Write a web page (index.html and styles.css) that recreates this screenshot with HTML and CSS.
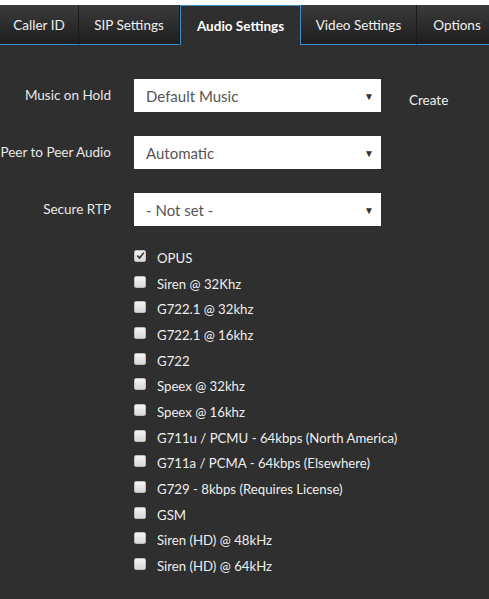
FILE: index.html
```html
<!DOCTYPE html>
<html>
<head>
<meta charset="utf-8">
<link rel="stylesheet" href="styles.css">
</head>
<body>
<div class="page">
  <nav class="tabs">
    <div class="tab t1">Caller ID</div>
    <div class="tab t2">SIP Settings</div>
    <div class="tab t3 active">Audio Settings</div>
    <div class="tab t4">Video Settings</div>
    <div class="tab t5">Options</div>
  </nav>
  <main class="content">
    <div class="row">
      <label class="label">Music on Hold</label>
      <div class="select"><span>Default Music</span><span class="arrow">▼</span></div>
      <a class="create">Create</a>
    </div>
    <div class="row">
      <label class="label">Peer to Peer Audio</label>
      <div class="select"><span>Automatic</span><span class="arrow">▼</span></div>
    </div>
    <div class="row">
      <label class="label">Secure RTP</label>
      <div class="select"><span>- Not set -</span><span class="arrow">▼</span></div>
    </div>
    <ul class="codecs">
      <li><span class="box checked"><svg viewBox="0 0 10 10" width="9" height="9"><path d="M1.5 5.2 L4 7.8 L8.6 1.8" fill="none" stroke="#333" stroke-width="1.8"/></svg></span>OPUS</li>
      <li><span class="box"></span>Siren @ 32Khz</li>
      <li><span class="box"></span>G722.1 @ 32khz</li>
      <li><span class="box"></span>G722.1 @ 16khz</li>
      <li><span class="box"></span>G722</li>
      <li><span class="box"></span>Speex @ 32khz</li>
      <li><span class="box"></span>Speex @ 16khz</li>
      <li><span class="box"></span>G711u / PCMU - 64kbps (North America)</li>
      <li><span class="box"></span>G711a / PCMA - 64kbps (Elsewhere)</li>
      <li><span class="box"></span>G729 - 8kbps (Requires License)</li>
      <li><span class="box"></span>GSM</li>
      <li><span class="box"></span>Siren (HD) @ 48kHz</li>
      <li><span class="box"></span>Siren (HD) @ 64kHz</li>
    </ul>
  </main>
</div>
</body>
</html>
```

FILE: styles.css
```css
html, body {
  margin: 0;
  padding: 0;
  background: #2f2f2f;
  font-family: Lato, "Open Sans", sans-serif;
  overflow: hidden;
}
.page {
  width: 489px;
  height: 599px;
  background: #2f2f2f;
  box-sizing: border-box;
  border-top: 5px solid #ffffff;
}
.tabs {
  display: flex;
  height: 40px;
  background: #fff;
}
.tab {
  box-sizing: border-box;
  height: 40px;
  display: flex;
  align-items: center;
  justify-content: center;
  color: #f0f0f0;
  font-size: 13.5px;
  background: linear-gradient(#3b3b3b, #1e1e1e);
  border-bottom: 1px solid #3d8fc9;
  border-right: 1px solid #1a1a1a;
  flex: none;
}
.t1 { width: 79px; }
.t2 { width: 101px; }
.t3 { width: 121px; }
.t4 { width: 116px; }
.t5 { width: 80px; border-right: none; }
.tab.active {
  background: #2f2f2f;
  border: 1px solid #3d8fc9;
  border-bottom: none;
  font-weight: bold;
  color: #ffffff;
}
.content {
  padding-top: 34px;
}
.row {
  display: flex;
  align-items: center;
  height: 33px;
  margin-bottom: 24px;
}
.label {
  width: 111px;
  text-align: right;
  color: #e8e8e8;
  font-size: 13.5px;
  white-space: nowrap;
  margin-right: 23px;
  display: flex;
  justify-content: flex-end;
  margin-top: -2px;
}
.select {
  width: 247px;
  height: 33px;
  box-sizing: border-box;
  background: #ffffff;
  display: flex;
  align-items: center;
  justify-content: space-between;
  padding: 0 7px 0 12px;
  color: #555555;
  font-size: 15px;
}
.arrow {
  font-size: 10px;
  color: #333;
}
.create {
  color: #f0f0f0;
  font-size: 13.5px;
  margin-left: 28px;
  margin-top: 9px;
}
.codecs {
  list-style: none;
  margin: 0;
  padding: 0 0 0 134px;
  margin-top: -5px;
}
.codecs li {
  display: flex;
  align-items: center;
  height: 25.7px;
  color: #eeeeee;
  font-size: 13.2px;
}
.box {
  width: 12px;
  height: 12px;
  box-sizing: border-box;
  background: linear-gradient(#f4f4f4, #d8d8d8);
  border: 1px solid #bdbdbd;
  border-radius: 2px;
  margin-right: 11px;
  margin-top: -4px;
  display: flex;
  align-items: center;
  justify-content: center;
}
```
